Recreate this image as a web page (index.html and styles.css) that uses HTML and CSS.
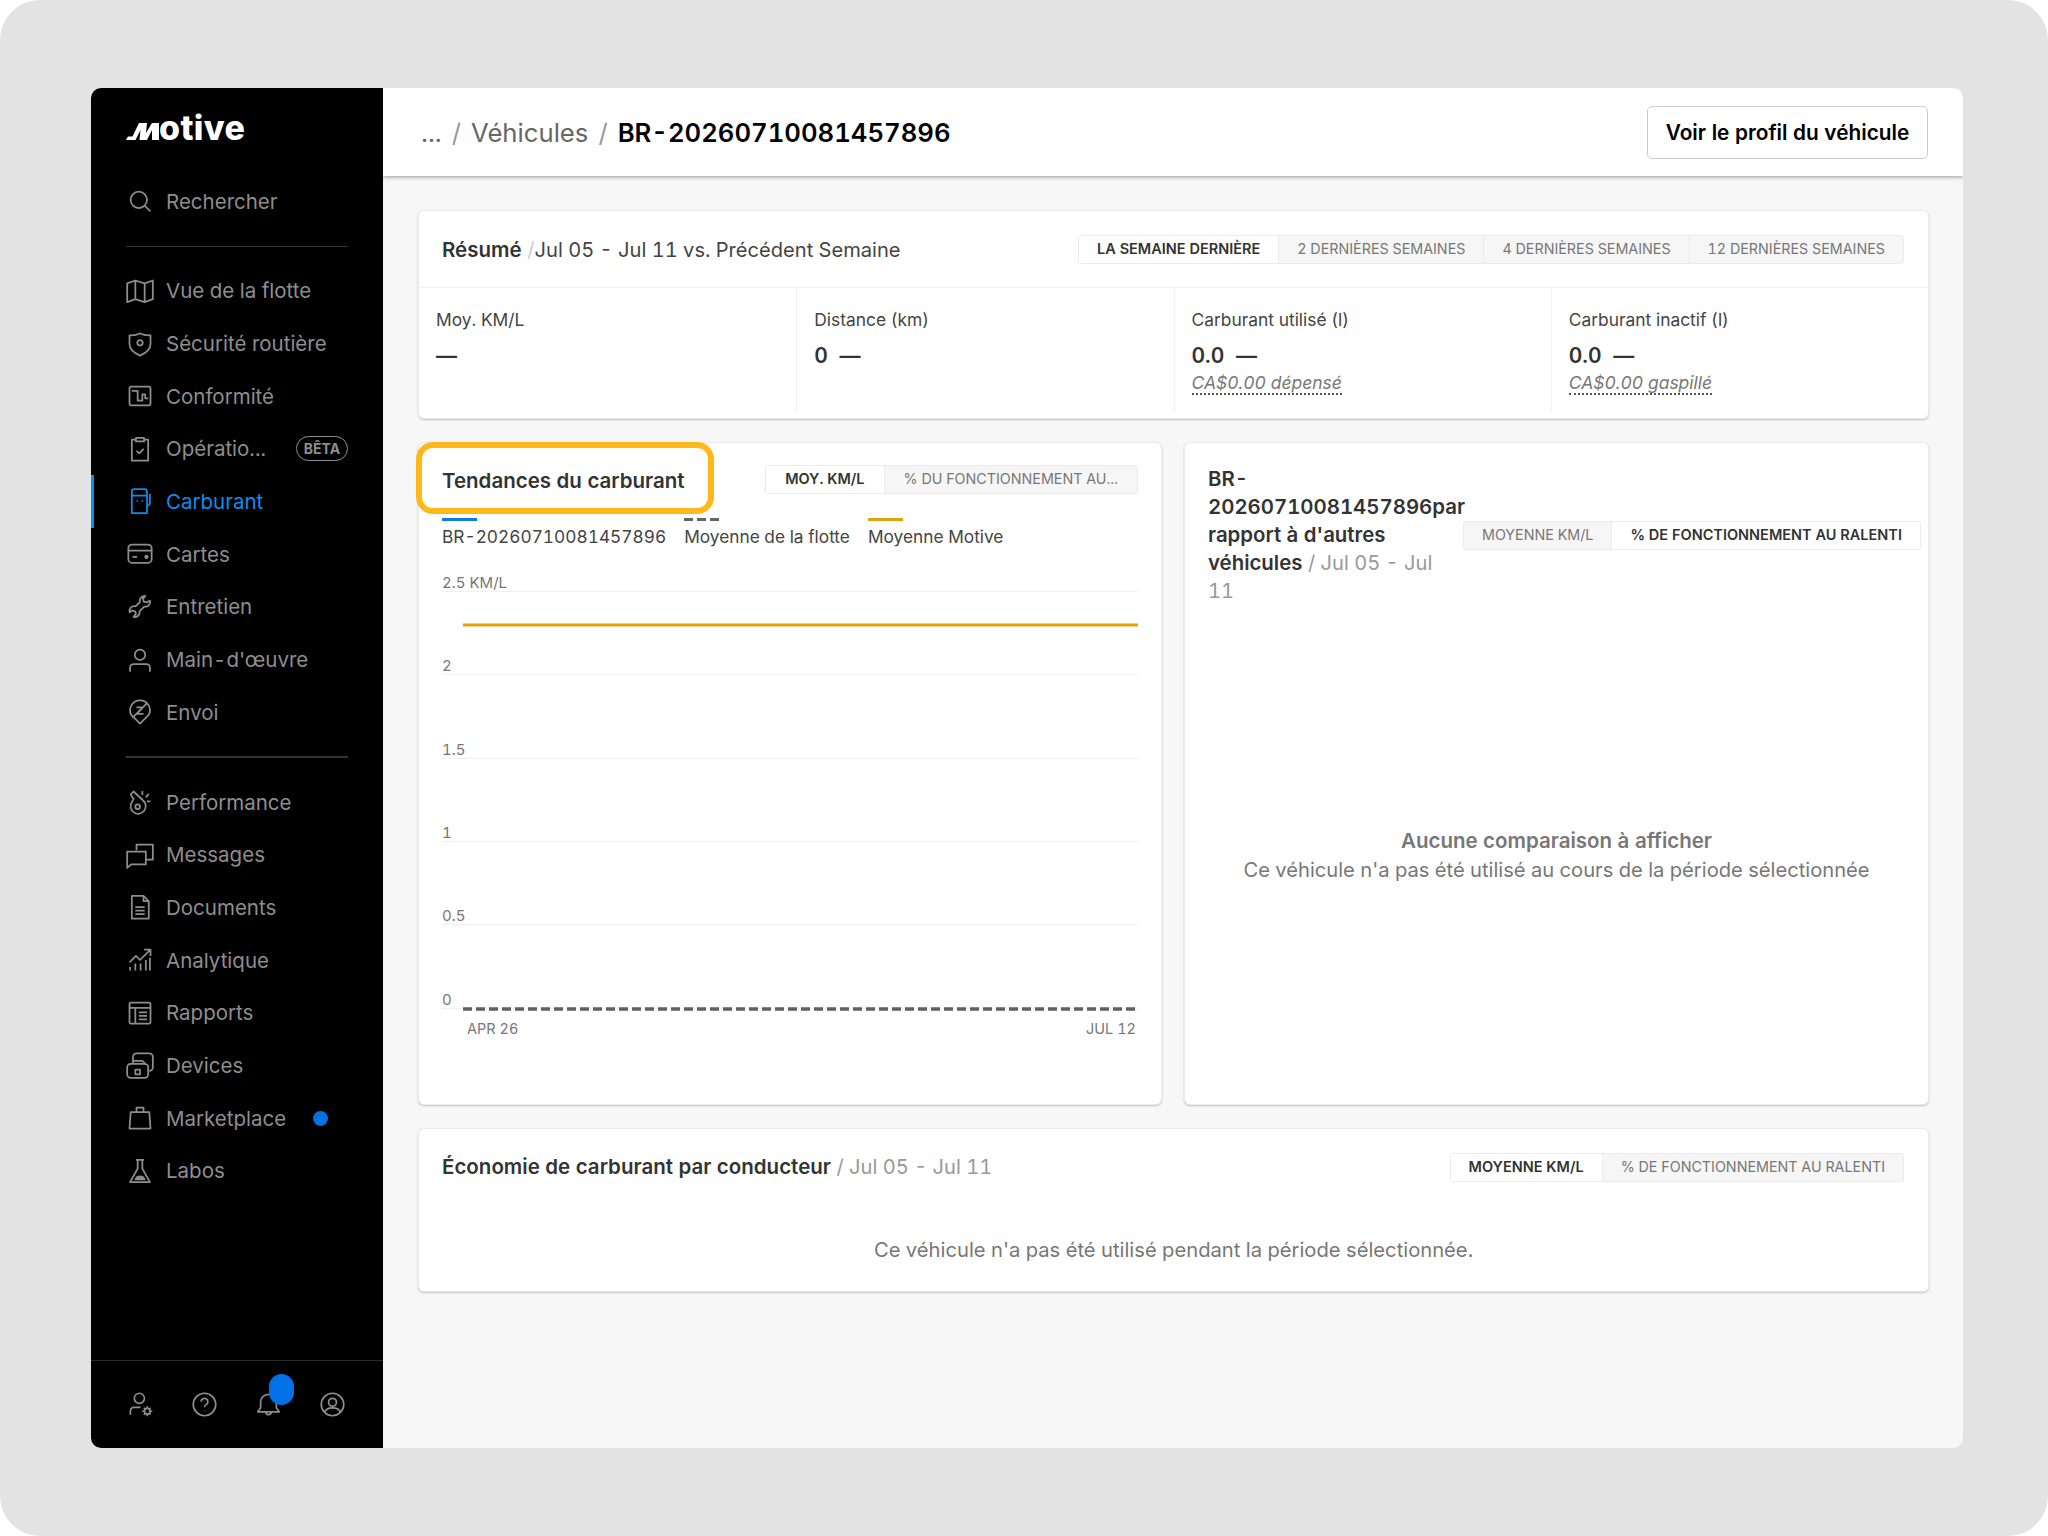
FILE: index.html
```html
<!DOCTYPE html>
<html lang="fr">
<head>
    <meta charset="UTF-8">
    <meta name="viewport" content="width=device-width, initial-scale=1.0">
    <title>Motive - Carburant</title>
    <link rel="stylesheet" href="styles.css">
</head>
<body>
    <div class="screen">
        <div class="window">
            <aside class="sidebar">
                <div class="logo">
                    <svg class="logo-m" viewBox="0 0 33 17"><path d="M0 17 2 13.5H6.5L13 0H21L20 10 26 0H33V17H26V7L21 17H13.5L14.5 7 9.5 17Z"/></svg>
                    <span class="logo-text">otive</span>
                </div>
                <a class="nav-item search">
                    <svg class="icon" viewBox="0 0 24 24"><circle cx="11" cy="11" r="7"/><path d="M16.2 16.2 21 21"/></svg>
                    <span>Rechercher</span>
                </a>
                <div class="nav-divider"></div>
                <nav class="nav-group">
                    <a class="nav-item">
                        <svg class="icon" viewBox="0 0 24 24"><path d="M1 5.5 8 3l8 2.5L23 3v16l-7 2.5L8 19l-7 2.5zM8 3v16M16 5.5v16"/></svg>
                        <span>Vue de la flotte</span>
                    </a>
                    <a class="nav-item">
                        <svg class="icon" viewBox="0 0 24 24"><path d="M12 3c3 1.3 6 1.8 9 1.5V12c0 4.5-3.5 7.5-9 10-5.500-2.500-9-5.500-9-10V4.500C6 4.800 9 4.300 12 3z"/><circle cx="12" cy="11" r="2.3"/></svg>
                        <span>Sécurité routière</span>
                    </a>
                    <a class="nav-item">
                        <svg class="icon" viewBox="0 0 24 24"><rect x="3" y="4" width="18" height="16" rx="1.5"/><path d="M5 7.5H10V16H14V10.5H16.5V14H19"/></svg>
                        <span>Conformité</span>
                    </a>
                    <a class="nav-item">
                        <svg class="icon" viewBox="0 0 24 24"><path d="M8.5 4H5v18h14V4h-3.5M8.5 2.5h7v3h-7z"/><path d="m9 13.5 2.3 2.3 3.9-4"/></svg>
                        <span class="truncated">Opératio...</span>
                        <span class="beta">BÊTA</span>
                    </a>
                    <a class="nav-item active">
                        <svg class="icon" viewBox="0 0 24 24"><path d="M5 21.5V3a2 2 0 0 1 2-2h9a2 2 0 0 1 2 2v18.5zM5 6.5h13M20.5 5v8a2 2 0 0 1-2.5 2"/><path d="M9 11h1M13.5 11h1"/></svg>
                        <span>Carburant</span>
                    </a>
                    <a class="nav-item">
                        <svg class="icon" viewBox="0 0 24 24"><rect x="2" y="4" width="20" height="15.5" rx="3"/><path d="M2 9h20M5.5 14.5h4"/><circle class="dot" cx="17.5" cy="14.5" r="1.8"/></svg>
                        <span>Cartes</span>
                    </a>
                    <a class="nav-item">
                        <svg class="icon" viewBox="0 0 24 24"><path d="M16.5 2.5 14.5 5l.8 2.4 2.4.7 2.8-1.6c.8 3-1.5 5.7-4.8 5.2l-4 3.8c.5 3.3-2.2 5.7-5.2 5l2-2.6-.7-2.2-2.3-.7-2.3 1.6c-.9-3.3 1.7-5.9 5-5.2l3.6-3.6c-.5-3 1.7-5.3 4.7-5.3z"/></svg>
                        <span>Entretien</span>
                    </a>
                    <a class="nav-item">
                        <svg class="icon" viewBox="0 0 24 24"><circle cx="12" cy="7.5" r="4.5"/><path d="M3.5 22v-3.5a3 3 0 0 1 3-3h11a3 3 0 0 1 3 3V22"/></svg>
                        <span>Main-d'œuvre</span>
                    </a>
                    <a class="nav-item">
                        <svg class="icon" viewBox="0 0 24 24"><path d="M12 22 4.5 14.5A8.5 8.5 0 1 1 19.5 14.5Z"/><path d="M9 8h5.5L9.5 13.5H15M18.5 4 5.5 17"/></svg>
                        <span>Envoi</span>
                    </a>
                </nav>
                <div class="nav-divider thick"></div>
                <nav class="nav-group">
                    <a class="nav-item">
                        <svg class="icon" viewBox="0 0 24 24"><path d="M4 5.5 6.5 3l8 7.5a6.5 6.5 0 1 1-9.5 1.5L6.5 9.5z"/><circle cx="10" cy="16" r="2"/><path d="M14 6V2.5M17 8l2.5-3M18 11.5h3"/></svg>
                        <span>Performance</span>
                    </a>
                    <a class="nav-item">
                        <svg class="icon" viewBox="0 0 24 24"><path d="M9 8V3h14v13h-6M1 9h16v11H4.5L1 23z"/></svg>
                        <span>Messages</span>
                    </a>
                    <a class="nav-item">
                        <svg class="icon" viewBox="0 0 24 24"><path d="M5 2.5h10L19.5 7v15H5zM15 2.5V7h4.5M8 12h8M8 15h8M8 18h8"/></svg>
                        <span>Documents</span>
                    </a>
                    <a class="nav-item">
                        <svg class="icon" viewBox="0 0 24 24"><path d="M3.5 21v-3M8 21v-6M12.5 21v-6M17 21v-9M20.5 21V10M3 14l5.5-5.5 3.5 3.5L20.500 3.500M15.500 3H21v5.500"/></svg>
                        <span>Analytique</span>
                    </a>
                    <a class="nav-item">
                        <svg class="icon" viewBox="0 0 24 24"><rect x="3" y="3" width="18" height="18" rx="1"/><path d="M3 7.5h18M8 7.5V21M11 11.5h7M11 14.5h7M11 17.5h7"/></svg>
                        <span>Rapports</span>
                    </a>
                    <a class="nav-item">
                        <svg class="icon" viewBox="0 0 24 24"><path d="M6 9V5a3 3 0 0 1 3-3h11a3 3 0 0 1 3 3v9a3 3 0 0 1-3 3"/><rect x="1" y="11" width="18" height="12" rx="3"/><path d="M6 11V8.5h7a3 3 0 0 1 3 3"/><rect x="8" y="16" width="4" height="4"/></svg>
                        <span>Devices</span>
                    </a>
                    <a class="nav-item">
                        <svg class="icon" viewBox="0 0 24 24"><path d="M4 7h16l1 14H3zM9 7V3h6v4"/></svg>
                        <span>Marketplace</span>
                        <span class="new-dot"></span>
                    </a>
                    <a class="nav-item">
                        <svg class="icon" viewBox="0 0 24 24"><path d="M8.5 2.5h7M10 2.5V10L3.5 21.5h17L14 10V2.5"/><path class="dot" d="M8.5 17c2.5-1.500 4.500-1.500 7 0l1.500 3H7z"/></svg>
                        <span>Labos</span>
                    </a>
                </nav>
                <div class="sidebar-footer">
                    <svg class="foot-icon" viewBox="0 0 24 24"><circle cx="11" cy="6.5" r="4.5"/><path d="M3 21v-3.5a3 3 0 0 1 3-3h6"/><circle cx="18" cy="18" r="2.5"/><path d="M18 13.5v2M18 20.5v2M13.5 18h2M20.5 18h2M15 15l1.2 1.2M19.8 19.8 21 21M15 21l1.2-1.2M19.8 16.2 21 15"/></svg>
                    <svg class="foot-icon" viewBox="0 0 24 24"><circle cx="12" cy="12" r="10"/><path d="M9 9.5a3 3 0 1 1 4.5 2.6c-1 .6-1.5 1.2-1.5 2.4M12 17.5v.5"/></svg>
                    <span class="bell">
                        <svg class="foot-icon" viewBox="0 0 24 24"><path d="M12 3a7 7 0 0 0-7 7v5l-2.500 3.500h19L19 15v-5a7 7 0 0 0-7-7zM9.500 18.500a2.500 2.500 0 0 0 5 0"/></svg>
                        <span class="bell-badge"></span>
                    </span>
                    <svg class="foot-icon" viewBox="0 0 24 24"><circle cx="12" cy="12" r="10"/><circle cx="12" cy="10" r="3.5"/><path d="M5 19c1-3 3.5-4 7-4s6 1 7 4"/></svg>
                </div>
            </aside>

            <main class="main">
                <header class="topbar">
                    <div class="crumbs">
                        <span class="crumb-dim">...</span>
                        <span class="crumb-sep">/</span>
                        <span class="crumb-dim">Véhicules</span>
                        <span class="crumb-sep">/</span>
                        <strong>BR-20260710081457896</strong>
                    </div>
                    <button class="profile-btn">Voir le profil du véhicule</button>
                </header>

                <div class="content">
                    <section class="card summary">
                        <div class="summary-head">
                            <h3 class="card-title">Résumé <span class="summary-slash">/</span><span class="summary-range">Jul 05 - Jul 11 vs. Précédent Semaine</span></h3>
                            <div class="tabs">
                                <span class="tab on">LA SEMAINE DERNIÈRE</span>
                                <span class="tab">2 DERNIÈRES SEMAINES</span>
                                <span class="tab">4 DERNIÈRES SEMAINES</span>
                                <span class="tab">12 DERNIÈRES SEMAINES</span>
                            </div>
                        </div>
                        <div class="stats">
                            <div class="stat">
                                <div class="stat-label">Moy. KM/L</div>
                                <div class="stat-value">—</div>
                            </div>
                            <div class="stat">
                                <div class="stat-label">Distance (km)</div>
                                <div class="stat-value">0 <span class="stat-dash">—</span></div>
                            </div>
                            <div class="stat">
                                <div class="stat-label">Carburant utilisé (l)</div>
                                <div class="stat-value">0.0 <span class="stat-dash">—</span></div>
                                <div class="stat-sub"><span>CA$0.00 dépensé</span></div>
                            </div>
                            <div class="stat">
                                <div class="stat-label">Carburant inactif (l)</div>
                                <div class="stat-value">0.0 <span class="stat-dash">—</span></div>
                                <div class="stat-sub"><span>CA$0.00 gaspillé</span></div>
                            </div>
                        </div>
                    </section>

                    <div class="two-cols">
                        <section class="card trends">
                            <div class="highlight"></div>
                            <div class="trends-head">
                                <h3 class="card-title">Tendances du carburant</h3>
                                <div class="tabs">
                                    <span class="tab on">MOY. KM/L</span>
                                    <span class="tab">% DU FONCTIONNEMENT AU...</span>
                                </div>
                            </div>
                            <div class="legend">
                                <div class="legend-item"><i class="swatch blue"></i>BR-20260710081457896</div>
                                <div class="legend-item"><i class="swatch dashed"></i>Moyenne de la flotte</div>
                                <div class="legend-item"><i class="swatch orange"></i>Moyenne Motive</div>
                            </div>
                            <div class="chart">
                                <div class="grid-row first"><span>2.5 KM/L</span></div>
                                <div class="grid-row"><span>2</span></div>
                                <div class="grid-row"><span>1.5</span></div>
                                <div class="grid-row"><span>1</span></div>
                                <div class="grid-row"><span>0.5</span></div>
                                <div class="grid-row"><span>0</span></div>
                                <svg class="chart-lines" viewBox="0 0 696 437">
                                    <line class="line-motive" x1="21" y1="53" x2="696" y2="53"/>
                                    <line class="line-fleet" x1="21" y1="437" x2="696" y2="437"/>
                                </svg>
                                <div class="x-axis"><span>APR 26</span><span>JUL 12</span></div>
                            </div>
                        </section>

                        <section class="card compare">
                            <div class="compare-head">
                                <h3 class="card-title compare-title">BR-<br>20260710081457896par<br>rapport à d'autres<br>véhicules <span class="range">/ Jul 05 - Jul<br>11</span></h3>
                                <div class="tabs">
                                    <span class="tab">MOYENNE KM/L</span>
                                    <span class="tab on">% DE FONCTIONNEMENT AU RALENTI</span>
                                </div>
                            </div>
                            <div class="empty">
                                <strong>Aucune comparaison à afficher</strong>
                                <span>Ce véhicule n'a pas été utilisé au cours de la période sélectionnée</span>
                            </div>
                        </section>
                    </div>

                    <section class="card drivers">
                        <div class="drivers-head">
                            <h3 class="card-title">Économie de carburant par conducteur <span class="range">/ Jul 05 - Jul 11</span></h3>
                            <div class="tabs">
                                <span class="tab on">MOYENNE KM/L</span>
                                <span class="tab">% DE FONCTIONNEMENT AU RALENTI</span>
                            </div>
                        </div>
                        <p class="drivers-empty">Ce véhicule n'a pas été utilisé pendant la période sélectionnée.</p>
                    </section>
                </div>
            </main>
        </div>
    </div>
</body>
</html>
```
FILE: styles.css
```css
* {
    box-sizing: border-box;
}
body {
    margin: 0;
    background-color: #fff;
    font-family: Inter, "Liberation Sans", sans-serif;
    font-feature-settings: "tnum";
    color: #333;
}
.screen {
    width: 2048px;
    height: 1536px;
    padding: 88px 85px 88px 91px;
    background-color: #e3e3e3;
    border-radius: 40px;
}
.window {
    display: flex;
    height: 100%;
    border-radius: 10px;
    overflow: hidden;
    background-color: #f7f7f7;
}

/* sidebar */
.sidebar {
    width: 292px;
    flex-shrink: 0;
    display: flex;
    flex-direction: column;
    background-color: #000;
}
.logo {
    display: flex;
    align-items: baseline;
    height: 90.5px;
    padding: 23px 0 0 35px;
    color: #fff;
}
.logo-m {
    width: 33px;
    height: 17px;
    fill: #fff;
}
.logo-text {
    font-size: 34px;
    font-weight: 800;
    line-height: 33px;
    letter-spacing: 0.4px;
    font-feature-settings: normal;
}
.nav-item {
    position: relative;
    display: flex;
    align-items: center;
    gap: 12px;
    height: 52.7px;
    padding-left: 35px;
    font-size: 20.5px;
    color: #8e8e8e;
}
.nav-item.search {
    height: 45px;
}
.nav-item.active {
    color: #0a8ff0;
    box-shadow: inset 3px 0 0 #0a8ff0;
}
.icon {
    width: 28px;
    height: 28px;
    flex-shrink: 0;
    fill: none;
    stroke: currentColor;
    stroke-width: 1.5;
    stroke-linejoin: round;
}
.icon .dot {
    fill: currentColor;
    stroke: none;
}
.nav-divider {
    height: 1px;
    margin: 22px 35px 18px;
    background-color: #333;
}
.nav-divider.thick {
    height: 2px;
    margin: 17px 35px 18px;
}
.beta {
    margin-left: auto;
    margin-right: 35px;
    width: 52px;
    height: 25px;
    border: 1px solid #8e8e8e;
    border-radius: 13px;
    font-size: 14px;
    font-weight: 700;
    line-height: 23px;
    text-align: center;
}
.new-dot {
    width: 15px;
    height: 15px;
    margin-left: 15px;
    border-radius: 50%;
    background-color: #0072e5;
}
.sidebar-footer {
    display: flex;
    align-items: center;
    justify-content: space-between;
    margin-top: auto;
    height: 88px;
    padding: 0 37px 0 36px;
    border-top: 1px solid #2a2a2a;
}
.foot-icon {
    display: block;
    width: 27px;
    height: 27px;
    fill: none;
    stroke: #8e8e8e;
    stroke-width: 1.5;
    stroke-linejoin: round;
}
.bell {
    position: relative;
}
.bell-badge {
    position: absolute;
    top: -17px;
    left: 14px;
    width: 25px;
    height: 31px;
    border-radius: 13px;
    background-color: #0072e5;
}

/* top bar */
.main {
    flex: 1;
    display: flex;
    flex-direction: column;
    min-width: 0;
}
.topbar {
    display: flex;
    align-items: center;
    justify-content: space-between;
    height: 88px;
    padding: 0 35px 0 38px;
    background-color: #fff;
    box-shadow: 0 1px 4px rgba(0, 0, 0, 0.4);
    flex-shrink: 0;
}
.crumbs {
    display: flex;
    align-items: baseline;
    gap: 10px;
    font-size: 25.7px;
    color: #000;
}
.crumbs strong {
    font-weight: 600;
}
.crumb-dim {
    color: #666;
}
.crumb-sep {
    color: #999;
}
.profile-btn {
    width: 281px;
    height: 53px;
    border: 1px solid #ccc;
    border-radius: 5px;
    background-color: #fff;
    font-family: inherit;
    font-feature-settings: inherit;
    font-size: 20.8px;
    font-weight: 600;
    color: #000;
}

/* cards */
.content {
    display: flex;
    flex-direction: column;
    gap: 23px;
    padding: 34px 34px 0 35px;
}
.card {
    position: relative;
    background-color: #fff;
    border: 1px solid #ebebeb;
    border-radius: 6px;
    box-shadow: 0 1px 2px rgba(0, 0, 0, 0.22);
}
.card-title {
    position: relative;
    margin: 0;
    font-size: 20.5px;
    font-weight: 600;
    color: #333;
}
.range {
    font-size: 20.1px;
    font-weight: 400;
    color: #999;
}
.tabs {
    display: flex;
    flex-shrink: 0;
    height: 29px;
    border: 1px solid #ebebeb;
    border-radius: 3px;
    background-color: #f6f6f6;
    position: relative;
}
.tab {
    padding: 0 18px;
    font-size: 14.3px;
    line-height: 26px;
    color: #777;
    white-space: nowrap;
    border-left: 1px solid #ebebeb;
}
.tab:first-child {
    border-left: 0;
}
.tab.on {
    background-color: #fff;
    font-size: 14.5px;
    font-weight: 600;
    color: #333;
}

/* summary card */
.summary {
    height: 209px;
}
.summary-head {
    display: flex;
    align-items: center;
    justify-content: space-between;
    height: 76px;
    padding: 0 24px 0 23px;
    margin-bottom: 1px;
    box-shadow: 0 1px 0 #f1f1f1;
}
.summary-slash {
    font-weight: 400;
    color: #ccc;
}
.summary-range {
    font-size: 20.1px;
    font-weight: 400;
    color: #444;
}
.stats {
    display: grid;
    grid-template-columns: repeat(4, 1fr);
    height: 124px;
}
.stat {
    padding: 20px 17px 0;
    border-left: 1px solid #f1f1f1;
}
.stat:first-child {
    border-left: 0;
}
.stat-label {
    font-size: 17.4px;
    line-height: 24px;
    color: #444;
}
.stat-value {
    margin-top: 9px;
    font-size: 21px;
    font-weight: 600;
    line-height: 30px;
    color: #333;
}
.stat-dash {
    margin-left: 6px;
}
.stat-sub {
    font-size: 17.5px;
    font-style: italic;
    line-height: 24px;
    color: #777;
}
.stat-sub span {
    border-bottom: 2px dotted #555;
}

/* trends card */
.two-cols {
    display: grid;
    grid-template-columns: 744px 745px;
    gap: 22px;
}
.trends,
.compare {
    height: 663px;
}
.highlight {
    position: absolute;
    top: -1px;
    left: -3px;
    width: 298px;
    height: 72px;
    border: 6px solid #ffb81c;
    border-radius: 17px;
}
.trends-head {
    display: flex;
    align-items: center;
    justify-content: space-between;
    height: 75px;
    padding: 0 23px;
}
.trends-head .tabs {
    margin-bottom: 2px;
}
.trends-head .tab {
    padding: 0 19px;
}
.legend {
    display: flex;
    gap: 18px;
    padding-left: 23px;
    font-size: 17.3px;
    color: #444;
}
.legend-item {
    display: flex;
    flex-direction: column;
    line-height: 24px;
}
.swatch {
    display: block;
    width: 35px;
    height: 3px;
    margin-bottom: 4px;
}
.swatch.blue {
    background-color: #0a7ce8;
}
.swatch.orange {
    background-color: #e5a00d;
}
.swatch.dashed {
    background: repeating-linear-gradient(90deg, #666 0, #666 9px, transparent 9px, transparent 13px);
}
.chart {
    position: relative;
    margin: 23px 23px 0;
}
.grid-row {
    display: flex;
    align-items: flex-end;
    height: 83.33px;
    border-bottom: 1px solid #f0f0f0;
    font-size: 15px;
    line-height: 20px;
    color: #777;
}
.grid-row span {
    margin-bottom: -2px;
}
.grid-row.first {
    height: 20px;
}
.chart-lines {
    position: absolute;
    top: 0;
    left: 0;
    width: 696px;
    height: 437px;
    overflow: visible;
}
.line-motive {
    stroke: #e5a00d;
    stroke-width: 3;
}
.line-fleet {
    stroke: #5f5f5f;
    stroke-width: 3.5;
    stroke-dasharray: 9 4;
}
.x-axis {
    display: flex;
    justify-content: space-between;
    margin-top: 10px;
    padding: 0 2px 0 25px;
    font-size: 14.5px;
    line-height: 20px;
    color: #777;
}

/* comparison card */
.compare {
    display: flex;
    flex-direction: column;
}
.compare-head {
    display: flex;
    align-items: center;
    padding: 22px 8px 0 23px;
}
.compare-head .tabs {
    margin-top: 1px;
}
.compare-title {
    width: 255px;
    flex-shrink: 0;
    font-size: 20.4px;
    line-height: 28px;
}
.empty {
    flex: 1;
    display: flex;
    flex-direction: column;
    align-items: center;
    justify-content: center;
    padding-bottom: 0;
    font-size: 20.15px;
    line-height: 29px;
    color: #777;
}
.empty strong {
    font-size: 20.5px;
    font-weight: 600;
}

/* driver card */
.drivers {
    height: 164px;
}
.drivers-head {
    display: flex;
    align-items: center;
    justify-content: space-between;
    padding: 22px 24px 0 23px;
}
.drivers-head .tabs {
    margin-top: 2px;
}
.drivers-empty {
    margin: 55px 0 0;
    font-size: 20.2px;
    line-height: 26px;
    text-align: center;
    color: #777;
}
```
